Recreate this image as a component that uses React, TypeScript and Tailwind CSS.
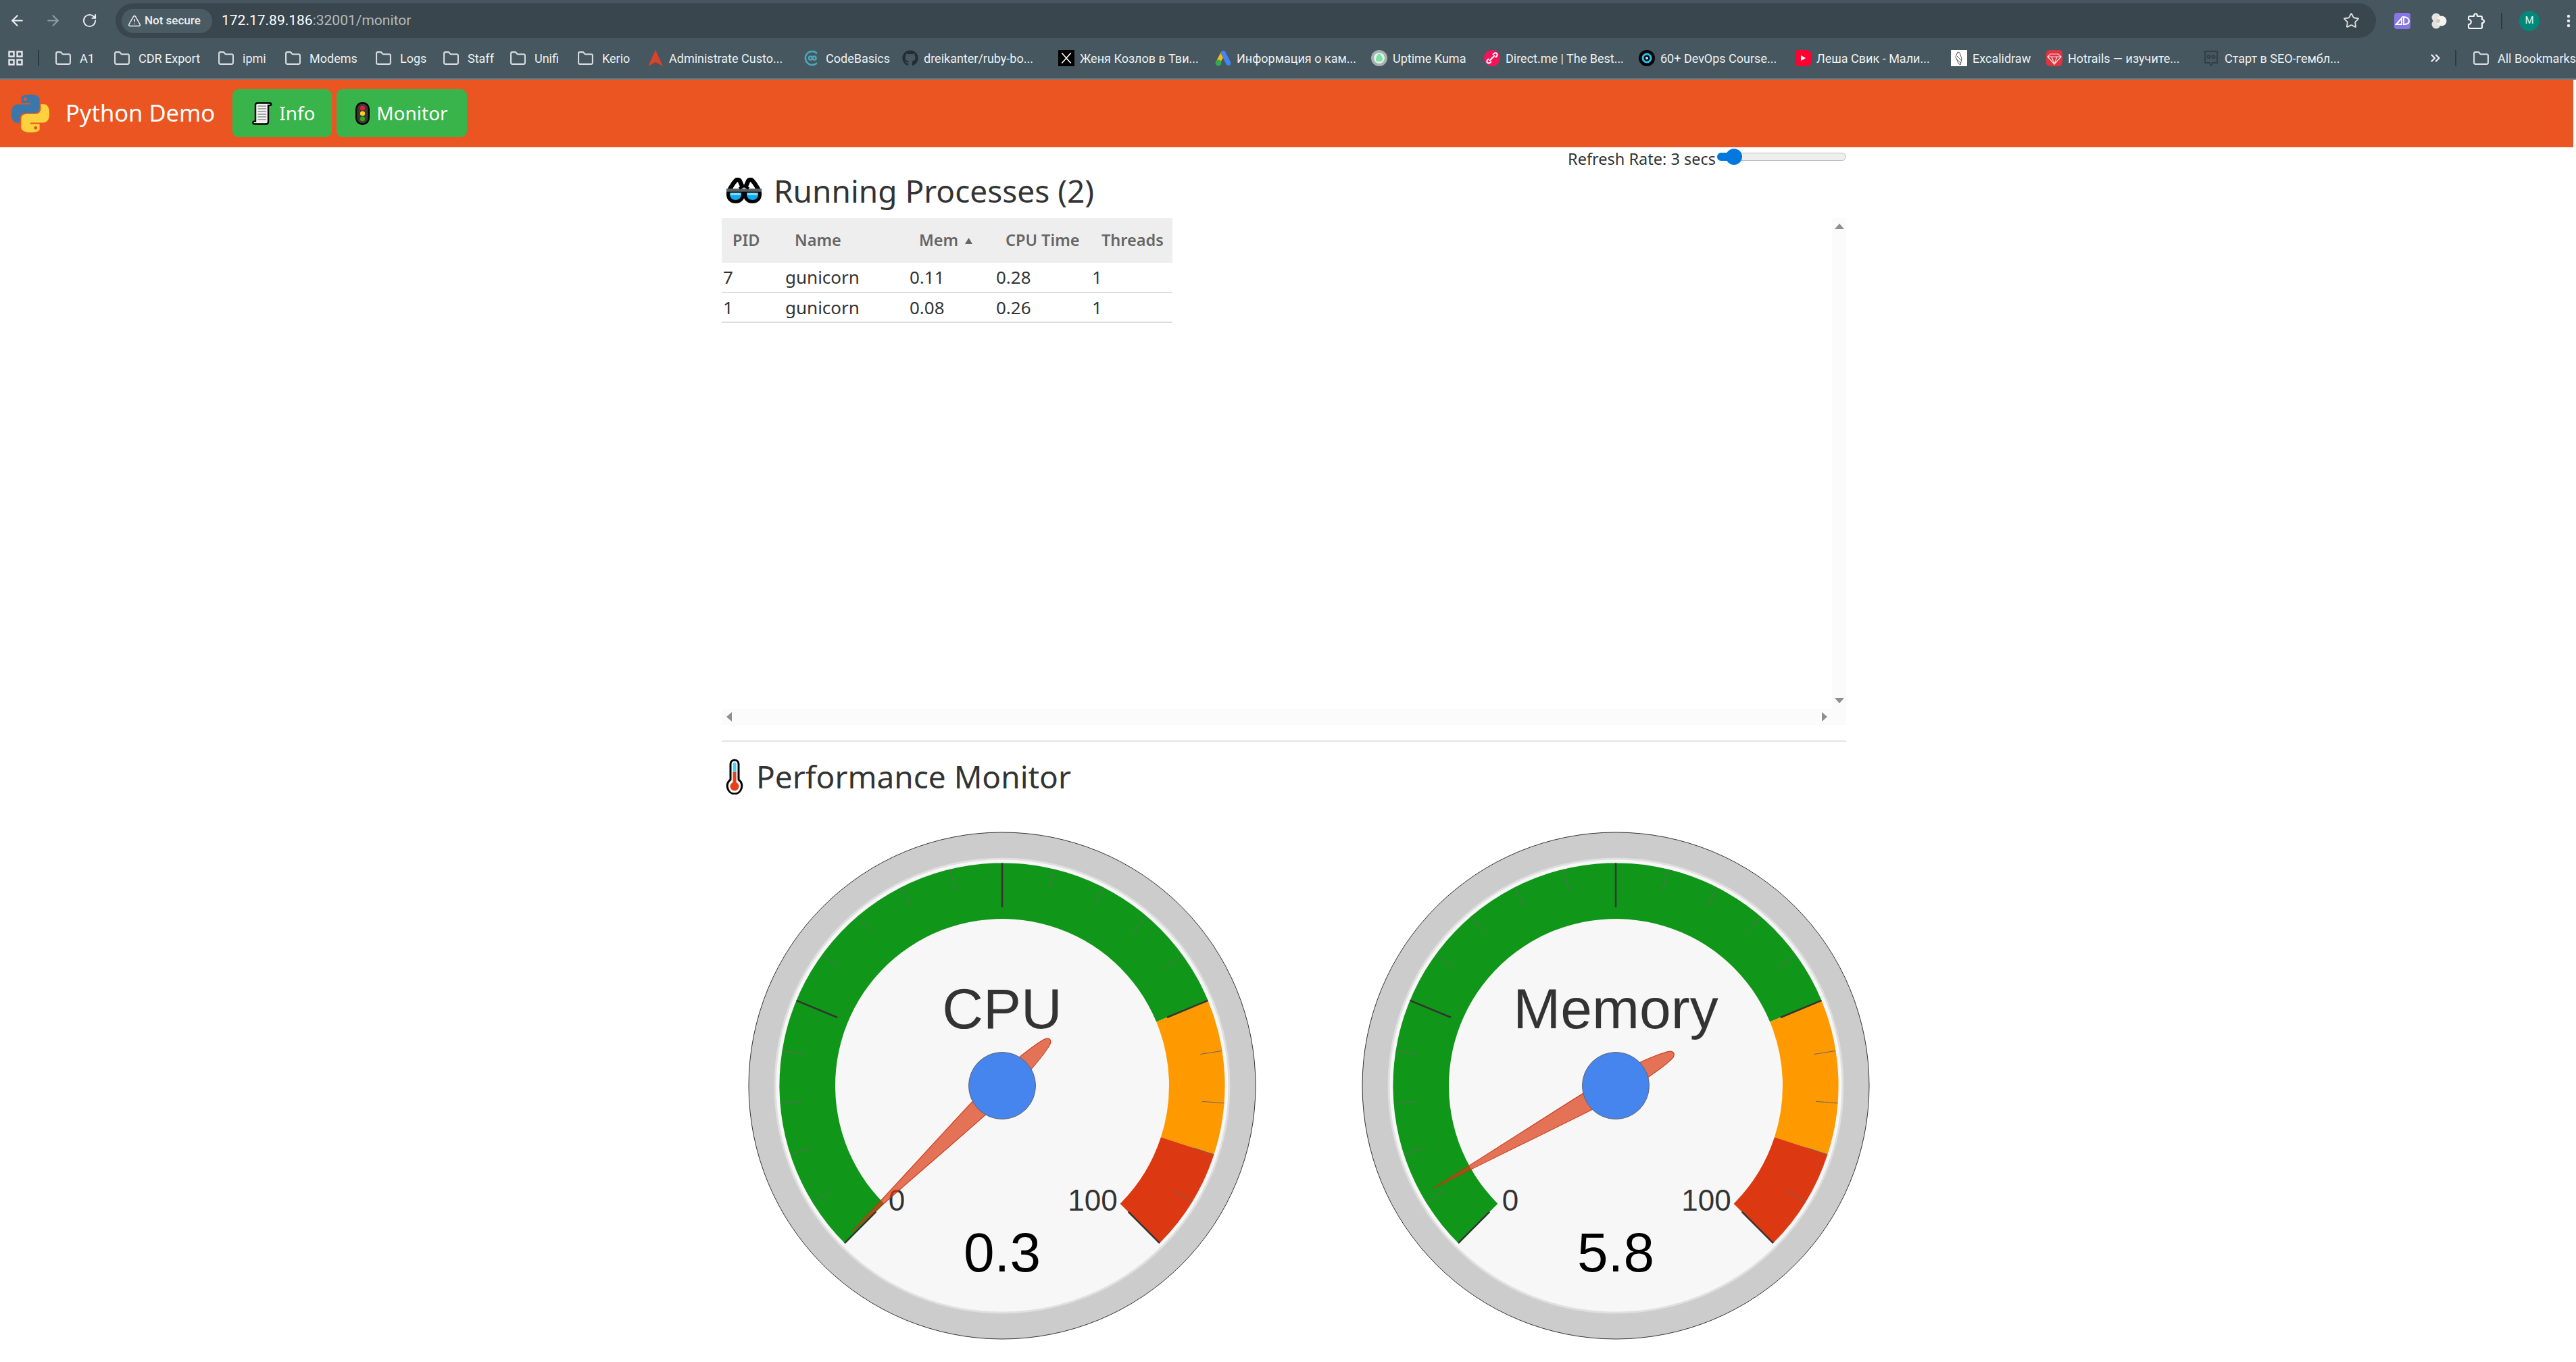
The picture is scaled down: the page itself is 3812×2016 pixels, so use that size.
import React from 'react'
import { ArrowLeft, ArrowRight, RotateCw, TriangleAlert, Star, EllipsisVertical, ChevronsRight, Folder } from 'lucide-react'
import { FaGithub } from 'react-icons/fa'

const polar = (r: number, deg: number) => {
    const a = (deg * Math.PI) / 180
    return [r * Math.sin(a), -r * Math.cos(a)]
}

const angleOf = (v: number) => -135 + (v / 100) * 270

function arc(from: number, to: number) {
    const R = 329.6
    const r = 247
    const a0 = angleOf(from)
    const a1 = angleOf(to)
    const large = a1 - a0 > 180 ? 1 : 0
    const [x0, y0] = polar(R, a0)
    const [x1, y1] = polar(R, a1)
    const [x2, y2] = polar(r, a1)
    const [x3, y3] = polar(r, a0)
    return `M${x0} ${y0}A${R} ${R} 0 ${large} 1 ${x1} ${y1}L${x2} ${y2}A${r} ${r} 0 ${large} 0 ${x3} ${y3}Z`
}

function Gauge({ title, value }: { title: string; value: number }) {
    const ticks = []
    for (let i = 0; i <= 20; i++) {
        const deg = angleOf(i * 5)
        const major = i % 5 === 0
        const [x0, y0] = polar(329.6, deg)
        const [x1, y1] = polar(major ? 264 : 297, deg)
        ticks.push(
            <line key={i} x1={x0} y1={y0} x2={x1} y2={y1} stroke={major ? '#333333' : '#666666'} strokeWidth={major ? 2.5 : 1} />
        )
    }
    return (
        <svg viewBox="-400 -400 800 800" className="w-[800px] h-[800px] shrink-0 font-['Liberation_Sans',sans-serif]">
            <circle r="375" fill="#cccccc" stroke="#333333" strokeWidth="1" />
            <circle r="336" fill="#f7f7f7" stroke="#e0e0e0" strokeWidth="3" />
            <path d={arc(0, 75)} fill="#109618" />
            <path d={arc(75, 90)} fill="#ff9900" />
            <path d={arc(90, 100)} fill="#dc3912" />
            {ticks}
            <text x="0" y="-85" textAnchor="middle" fontSize="84" fill="#333333">{title}</text>
            <text x="-156" y="185" textAnchor="middle" fontSize="44" fill="#333333">0</text>
            <text x="134" y="185" textAnchor="middle" fontSize="44" fill="#333333">100</text>
            <text x="0" y="275" textAnchor="middle" fontSize="82" fill="#000000">{value}</text>
            <g transform={`rotate(${angleOf(value)})`}>
                <path
                    d="M0 -311C4 -220 13 -80 15 -20C16 30 10 82 5 95Q0 102 -5 95C-10 82 -16 30 -15 -20C-13 -80 -4 -220 0 -311Z"
                    fill="#dc3912"
                    fillOpacity="0.7"
                    stroke="#c63310"
                    strokeWidth="1"
                />
            </g>
            <circle r="49.5" fill="#4684ee" stroke="#666666" strokeWidth="1" />
        </svg>
    )
}

function PythonLogo() {
    return (
        <svg viewBox="0 0 24 24" className="w-[56px] h-[56px]">
            <path
                fill="#3b77a8"
                fillRule="evenodd"
                d="M14.25.18l.9.2.73.26.59.3.45.32.34.34.25.34.16.33.1.3.04.26.02.2-.01.13V8.5l-.05.63-.13.55-.21.46-.26.38-.3.31-.33.25-.35.19-.35.14-.33.1-.3.07-.26.04-.21.02H8.77l-.69.05-.59.14-.5.22-.41.27-.33.32-.27.35-.2.36-.15.37-.1.35-.07.32-.04.27-.02.21v3.06H3.17l-.21-.03-.28-.07-.32-.12-.35-.18-.36-.26-.36-.36-.35-.46-.32-.59-.28-.73-.21-.88-.14-1.05-.05-1.23.06-1.22.16-1.04.24-.87.32-.71.36-.57.4-.44.42-.33.42-.24.4-.16.36-.1.32-.05.24-.01h.16l.06.01h8.16v-.83H6.18l-.01-2.75-.02-.37.05-.34.11-.31.17-.28.25-.26.31-.23.38-.2.44-.18.51-.15.58-.12.64-.1.71-.06.77-.04.84-.02 1.27.05zm-6.3 1.98l-.23.33-.08.41.08.41.23.34.33.22.41.09.41-.09.33-.22.23-.34.08-.41-.08-.41-.23-.33-.33-.22-.41-.09-.41.09z"
            />
            <path
                fill="#fdd23e"
                fillRule="evenodd"
                d="M21.04 6.11l.28.06.32.12.35.18.36.27.36.35.35.47.32.59.28.73.21.88.14 1.04.05 1.23-.06 1.23-.16 1.04-.24.86-.32.71-.36.57-.4.45-.42.33-.42.24-.4.16-.36.09-.32.05-.24.02-.16-.01h-8.22v.82h5.84l.01 2.76.02.36-.05.34-.11.31-.17.29-.25.25-.31.24-.38.2-.44.17-.51.15-.58.13-.64.09-.71.07-.77.04-.84.01-1.27-.04-1.07-.14-.9-.2-.73-.25-.59-.3-.45-.33-.34-.34-.25-.34-.16-.33-.1-.3-.04-.25-.02-.2.01-.13v-5.34l.05-.64.13-.54.21-.46.26-.38.3-.32.33-.24.35-.2.35-.14.33-.1.3-.06.26-.04.21-.02.13-.01h5.84l.69-.05.59-.14.5-.21.41-.28.33-.32.27-.35.2-.36.15-.36.1-.35.07-.32.04-.28.02-.21V6.07h2.09l.14.01zm-6.47 14.25l-.23.33-.08.41.08.41.23.33.33.23.41.08.41-.08.33-.23.23-.33.08-.41-.08-.41-.23-.33-.33-.23-.41-.08-.41.08z"
            />
        </svg>
    )
}

function ScrollIcon() {
    return (
        <svg viewBox="0 0 30 34" className="w-[30px] h-[34px] shrink-0">
            <path d="M8 1.5H26C29 1.5 29 5 26 5H24V29C24 31 23 32.5 21 32.5H4C0.5 32.5 0.5 28.5 4 28.5H5V4C5 2.5 6.5 1.5 8 1.5Z" fill="#f2f2f2" stroke="#000" strokeWidth="2.4" />
            <path d="M8.5 6H21M8.5 10H21M8.5 14H21M8.5 18H21M8.5 22H21M8.5 26H21" stroke="#a8a8a8" strokeWidth="2" />
        </svg>
    )
}

function TrafficIcon() {
    return (
        <svg viewBox="0 0 21 34" className="w-[21px] h-[34px] shrink-0">
            <rect x="1.2" y="1.2" width="18.6" height="31.6" rx="9" fill="#3a3a3a" stroke="#000" strokeWidth="2.4" />
            <circle cx="10.5" cy="9" r="3.6" fill="#e2202a" />
            <circle cx="10.5" cy="17" r="3.6" fill="#f8d61c" />
            <circle cx="10.5" cy="25" r="3.6" fill="#35a818" />
        </svg>
    )
}

function GlassesIcon() {
    return (
        <svg viewBox="0 0 54 38" className="w-[54px] h-[38px] shrink-0">
            <path d="M5 19C8 13 11 8 15 4C17 2 20 3 21 5L23 10" fill="none" stroke="#000" strokeWidth="6.5" strokeLinecap="round" />
            <path d="M49 19C46 13 43 8 39 4C37 2 34 3 33 5L31 10" fill="none" stroke="#000" strokeWidth="6.5" strokeLinecap="round" />
            <path d="M3.5 20H25.5V25C25.5 32 20 35.5 14.5 35.5C9 35.5 3.5 32 3.5 25Z" fill="#0fa9f5" stroke="#000" strokeWidth="5" />
            <path d="M28.5 20H50.5V25C50.5 32 45 35.5 39.5 35.5C34 35.5 28.5 32 28.5 25Z" fill="#0fa9f5" stroke="#000" strokeWidth="5" />
            <path d="M7 22.5H22V26H7ZM32 22.5H47V26H32Z" fill="#86dcfb" />
            <path d="M1 18.5H53" stroke="#5b5f63" strokeWidth="4.5" />
            <path d="M20 16L27 12L34 16" fill="none" stroke="#000" strokeWidth="4" />
        </svg>
    )
}

function ThermometerIcon() {
    return (
        <svg viewBox="0 0 28 53" className="w-[28px] h-[53px] shrink-0">
            <path d="M8 8C8 0 20 0 20 8V31C29 38 24 52 14 52C4 52 -1 38 8 31Z" fill="#fff" stroke="#000" strokeWidth="3" />
            <path d="M14 8V20" stroke="#4fd0ee" strokeWidth="5" strokeLinecap="round" />
            <path d="M14 20V38" stroke="#e8401c" strokeWidth="5" />
            <circle cx="14" cy="41" r="6.5" fill="#e8401c" />
        </svg>
    )
}

const bookmarkText = "text-[18px] text-[#eef1f2] whitespace-nowrap"

function FolderMark({ label, className }: { label: string; className: string }) {
    return (
        <div className={`flex items-center gap-[12px] shrink-0 ${className}`}>
            <Folder size={25} strokeWidth={2} className="text-[#d8dcde] shrink-0" />
            <span className={bookmarkText}>{label}</span>
        </div>
    )
}

function Mark({ label, className, children }: { label: string; className: string; children: React.ReactNode }) {
    return (
        <div className={`flex items-center gap-[8px] shrink-0 ${className}`}>
            <span className="w-[24px] h-[24px] shrink-0 flex items-center justify-center">{children}</span>
            <span className={bookmarkText}>{label}</span>
        </div>
    )
}

function Bookmarks() {
    return (
        <div className="h-[62px] border-b-[2px] border-[#6f7c84] bg-[#465760] flex items-center pl-[12px] font-['Roboto',sans-serif]">
            <svg viewBox="0 0 22 22" className="w-[22px] h-[22px] shrink-0 mr-[22px]" fill="none" stroke="#e8eaed" strokeWidth="2.4">
                <rect x="1.5" y="1.5" width="7" height="7" />
                <rect x="13.5" y="1.5" width="7" height="7" />
                <rect x="1.5" y="13.5" width="7" height="7" />
                <rect x="13.5" y="13.5" width="7" height="7" />
            </svg>
            <div className="w-[2px] h-[24px] bg-[#2f3a40] mr-[23px] shrink-0" />
            <FolderMark label="A1" className="w-[87px]" />
            <FolderMark label="CDR Export" className="w-[154px]" />
            <FolderMark label="ipmi" className="w-[99px]" />
            <FolderMark label="Modems" className="w-[134px]" />
            <FolderMark label="Logs" className="w-[100px]" />
            <FolderMark label="Staff" className="w-[99px]" />
            <FolderMark label="Unifi" className="w-[100px]" />
            <FolderMark label="Kerio" className="w-[104px]" />
            <Mark label="Administrate Custo..." className="w-[232px]">
                <svg viewBox="0 0 24 24" className="w-[24px] h-[24px]"><path d="M12 0L23 24L12 18L1 24Z" fill="#d8432c" /></svg>
            </Mark>
            <Mark label="CodeBasics" className="w-[145px]">
                <svg viewBox="0 0 24 24" className="w-[24px] h-[24px]" fill="none" stroke="#4aa8bd" strokeWidth="2.5">
                    <path d="M19 5A10 10 0 1 0 19 19" />
                    <circle cx="9.5" cy="12" r="2.5" />
                    <circle cx="15" cy="12" r="2.5" />
                </svg>
            </Mark>
            <Mark label="dreikanter/ruby-bo..." className="w-[231px]">
                <FaGithub size={24} className="text-[#252c33]" />
            </Mark>
            <Mark label="Женя Козлов в Тви..." className="w-[232px]">
                <span className="w-[24px] h-[24px] bg-black flex items-center justify-center">
                    <svg viewBox="0 0 24 24" className="w-[20px] h-[20px]" fill="none" stroke="#fff" strokeWidth="2">
                        <path d="M4 3L20 21M20 3L4 21" />
                    </svg>
                </span>
            </Mark>
            <Mark label="Информация о кам..." className="w-[231px]">
                <svg viewBox="0 0 24 24" className="w-[24px] h-[24px]">
                    <path d="M9 3L1 18L6 22L15 6Z" fill="#fbbc04" />
                    <path d="M12 1C14 1 15 2 16 4L23 18C24 21 22 23 20 23C18 23 17 22 16 20L9 6C8 3 10 1 12 1Z" fill="#4285f4" />
                    <circle cx="5" cy="19" r="4.5" fill="#34a853" />
                </svg>
            </Mark>
            <Mark label="Uptime Kuma" className="w-[167px]">
                <svg viewBox="0 0 24 24" className="w-[24px] h-[24px]">
                    <circle cx="12" cy="12" r="12" fill="#a9b0b2" />
                    <circle cx="12" cy="12" r="8" fill="#e2f3e8" />
                    <path d="M12 5C16 8 17 12 17 15C17 18 7 18 7 15C7 12 8 8 12 5Z" fill="#7fe3a4" />
                </svg>
            </Mark>
            <Mark label="Direct.me | The Best..." className="w-[229px]">
                <svg viewBox="0 0 24 24" className="w-[24px] h-[24px]">
                    <circle cx="12" cy="12" r="12" fill="#f2145b" />
                    <path d="M8 16L16 8M7 13L5 15C3 19 7 21 10 18L11 17M13 7L15 5C18 3 21 6 19 9L17 11" fill="none" stroke="#fff" strokeWidth="2" />
                </svg>
            </Mark>
            <Mark label="60+ DevOps Course..." className="w-[231px]">
                <svg viewBox="0 0 24 24" className="w-[24px] h-[24px]">
                    <circle cx="12" cy="12" r="12" fill="#050505" />
                    <circle cx="12" cy="12" r="6" fill="none" stroke="#27c1ee" strokeWidth="3" />
                    <circle cx="12" cy="12" r="2" fill="#bdeffc" />
                </svg>
            </Mark>
            <Mark label="Леша Свик - Мали..." className="w-[231px]">
                <svg viewBox="0 0 24 24" className="w-[24px] h-[24px]">
                    <rect width="24" height="24" rx="6" fill="#ff0033" />
                    <path d="M9 8L16 12L9 16Z" fill="#fff" />
                </svg>
            </Mark>
            <Mark label="Excalidraw" className="w-[141px]">
                <svg viewBox="0 0 24 24" className="w-[24px] h-[24px]">
                    <rect width="24" height="24" fill="#fff" />
                    <path d="M10 3L7 10L11 20L14 22L16 13L13 4ZM9 9L15 15M8 13L14 19" fill="none" stroke="#555" strokeWidth="1" />
                </svg>
            </Mark>
            <Mark label="Hotrails — изучите..." className="w-[232px]">
                <svg viewBox="0 0 24 24" className="w-[24px] h-[24px]">
                    <rect width="24" height="24" rx="5" fill="#db3540" />
                    <path d="M6 6H18L22 10L12 21L2 10ZM2 10H22M8 10L12 21L16 10" fill="none" stroke="#ffd9dc" strokeWidth="1.2" />
                </svg>
            </Mark>
            <Mark label="Старт в SEO-гембл..." className="w-[333px]">
                <svg viewBox="0 0 24 24" className="w-[24px] h-[24px]" fill="none" stroke="#333e44" strokeWidth="2">
                    <path d="M3 2H21V19H14L12 23L10 19H3Z" />
                    <circle cx="8.5" cy="10" r="2" />
                    <circle cx="15.5" cy="10" r="2" />
                </svg>
            </Mark>
            <ChevronsRight size={22} strokeWidth={2.4} className="text-[#eef1f2] shrink-0 mr-[18px]" />
            <div className="w-[2px] h-[24px] bg-[#2f3a40] mr-[24px] shrink-0" />
            <FolderMark label="All Bookmarks" className="" />
        </div>
    )
}

function Toolbar() {
    return (
        <div className="h-[56px] bg-[#465760] flex items-start font-['Roboto',sans-serif]">
            <div className="h-[51px] mt-[5px] flex items-center shrink-0 pl-[13px]">
                <ArrowLeft size={25} strokeWidth={2} className="text-[#eef1f2] mr-[28px]" />
                <ArrowRight size={25} strokeWidth={2} className="text-[#8f9ca3] mr-[30px]" />
                <RotateCw size={23} strokeWidth={2} className="text-[#eef1f2] mr-[27px]" />
            </div>
            <div className="w-[3345px] h-[51px] mt-[5px] rounded-full bg-[#3a464d] flex items-center pl-[9px] pr-[24px] shrink-0">
                <div className="w-[134px] h-[36px] rounded-full bg-[#4b5b63] flex items-center pl-[9px] gap-[5px] shrink-0">
                    <TriangleAlert size={20} strokeWidth={1.8} className="text-[#eef1f2] shrink-0" />
                    <span className="text-[17px] font-medium text-[#eef1f2] whitespace-nowrap">Not secure</span>
                </div>
                <span className="ml-[14px] text-[21px] text-white whitespace-nowrap">
                    172.17.89.186<span className="text-[#b3babe]">:32001/monitor</span>
                </span>
                <Star size={25} strokeWidth={1.8} className="text-[#d8dcde] ml-auto" />
            </div>
            <div className="h-[51px] mt-[5px] flex items-center shrink-0 pl-[27px]">
                <svg viewBox="0 0 24 24" className="w-[24px] h-[24px] mr-[30px]">
                    <rect width="24" height="24" rx="4" fill="#8777e4" />
                    <path d="M3 17H11V8ZM12 6C19 6 22 9 22 12C22 15 19 17 14 17V6" fill="none" stroke="#fff" strokeWidth="2" />
                </svg>
                <svg viewBox="0 0 24 24" className="w-[24px] h-[24px] mr-[30px]">
                    <circle cx="8" cy="7" r="6.5" fill="#e6e3df" />
                    <circle cx="8" cy="17" r="6.5" fill="#e6e3df" />
                    <circle cx="16" cy="12" r="7.5" fill="#f5f3f0" />
                    <circle cx="11" cy="12" r="3" fill="#cfccc8" />
                </svg>
                <svg viewBox="0 0 26 26" className="w-[26px] h-[26px] mr-[24px]" fill="none" stroke="#f4f4f4" strokeWidth="2.2" strokeLinejoin="round">
                    <path d="M4 6H10C10 1 15 1 15 6H20C21 6 22 7 22 8V11C26 11 26 16 22 16V22C22 23 21 24 20 24H4C3 24 2 23 2 22V18C7 18 7 11 2 11V8C2 7 3 6 4 6Z" />
                </svg>
                <div className="w-[2px] h-[24px] bg-[#2f3a40] mr-[25px]" />
                <span className="w-[30px] h-[30px] rounded-full bg-[#00897b] text-[#e8f5f3] text-[15px] flex items-center justify-center mr-[31px]">M</span>
                <EllipsisVertical size={24} strokeWidth={2.4} className="text-[#eef1f2]" />
            </div>
        </div>
    )
}

function Navbar() {
    return (
        <nav className="w-[3808px] h-[100px] bg-[#eb5521] flex items-center pl-[17px] font-['Noto_Sans',sans-serif]">
            <PythonLogo />
            <span className="ml-[24px] mt-[-3px] text-[34.5px] text-white whitespace-nowrap">Python Demo</span>
            <div className="ml-[26px] w-[147px] h-[71px] mt-[-1px] rounded-[9px] bg-[#38b44a] flex items-center pl-[29px] gap-[10px] text-[28px] text-white">
                <ScrollIcon />
                <span className="mt-[-2px]">Info</span>
            </div>
            <div className="ml-[7px] w-[193px] h-[71px] mt-[-1px] rounded-[9px] bg-[#38b44a] flex items-center pl-[28px] gap-[10px] text-[28px] text-white">
                <TrafficIcon />
                <span className="mt-[-2px]">Monitor</span>
            </div>
        </nav>
    )
}

function ProcessTable() {
    const th = "h-[66px] pl-[16px] text-left text-[23.5px] font-semibold text-[#666666] whitespace-nowrap"
    const td = "h-[44px] pl-[2px] text-[26px] text-[#333333] border-b-[2px] border-[#dddddd]"
    return (
        <table className="w-[667px] table-fixed border-collapse">
            <colgroup>
                <col className="w-[92px]" />
                <col className="w-[184px]" />
                <col className="w-[128px]" />
                <col className="w-[142px]" />
                <col className="w-[121px]" />
            </colgroup>
            <thead className="bg-[#eeeeee]">
                <tr>
                    <th className={th}>PID</th>
                    <th className={th}>Name</th>
                    <th className={th}>
                        <span className="flex items-center gap-[10px]">
                            Mem
                            <svg viewBox="0 0 12 10" className="w-[11px] h-[9px]"><path d="M6 0L12 10H0Z" fill="#666666" /></svg>
                        </span>
                    </th>
                    <th className={th}>CPU Time</th>
                    <th className={th}>Threads</th>
                </tr>
            </thead>
            <tbody>
                <tr>
                    <td className={td}>7</td>
                    <td className={td}>gunicorn</td>
                    <td className={td}>0.11</td>
                    <td className={td}>0.28</td>
                    <td className={td}>1</td>
                </tr>
                <tr>
                    <td className={td}>1</td>
                    <td className={td}>gunicorn</td>
                    <td className={td}>0.08</td>
                    <td className={td}>0.26</td>
                    <td className={td}>1</td>
                </tr>
            </tbody>
        </table>
    )
}

function Arrow({ points, className }: { points: string; className: string }) {
    return (
        <svg viewBox="0 0 16 16" className={className} preserveAspectRatio="none">
            <polygon points={points} fill="#8f8f8f" />
        </svg>
    )
}

export default function App() {
    return (
        <div className="w-[3812px] h-[2016px] overflow-hidden bg-white text-[#333333]">
            <Toolbar />
            <Bookmarks />
            <Navbar />
            <main className="w-[1664px] ml-[1068px] font-['Noto_Sans',sans-serif]">
                <div className="h-[30px] flex justify-end items-start">
                    <span className="text-[23.5px] leading-[30px] mt-[2px] whitespace-nowrap">Refresh Rate: 3 secs</span>
                    <div className="relative w-[191px] h-[12px] mt-[8px] ml-[2px] rounded-full bg-[#eeeeee] border border-[#bbbbbb]">
                        <div className="w-[30px] h-[12px] mt-[-1px] ml-[-1px] rounded-l-full bg-[#0278dc]" />
                        <div className="absolute left-[12px] top-[-7px] w-[24px] h-[24px] rounded-full bg-[#0278dc]" />
                    </div>
                </div>
                <div className="h-[75px] flex items-center pb-[7px] pl-[6px] gap-[17px]">
                    <GlassesIcon />
                    <h2 className="text-[46px] leading-none whitespace-nowrap">Running Processes (2)</h2>
                </div>
                <div className="h-[726px] flex">
                    <div className="flex-1"><ProcessTable /></div>
                    <div className="w-[21px] bg-[#fbfbfb] flex flex-col items-center justify-between py-[8px]">
                        <Arrow points="8,0 16,16 0,16" className="w-[14px] h-[8px]" />
                        <Arrow points="0,0 16,0 8,16" className="w-[14px] h-[8px]" />
                    </div>
                </div>
                <div className="h-[24px] bg-[#fbfbfb] flex items-center justify-between pl-[7px] pr-[28px]">
                    <Arrow points="16,0 16,16 0,8" className="w-[8px] h-[14px]" />
                    <Arrow points="0,0 16,8 0,16" className="w-[8px] h-[14px]" />
                </div>
                <hr className="mt-[23px] border-t-[2px] border-[#e5e5e5]" />
                <div className="h-[109px] flex items-start pt-[25px] pl-[5px] gap-[18px]">
                    <ThermometerIcon />
                    <h2 className="text-[46px] leading-[53px] whitespace-nowrap">Performance Monitor</h2>
                </div>
                <div className="flex gap-[108px] pl-[15px]">
                    <Gauge title="CPU" value={0.3} />
                    <Gauge title="Memory" value={5.8} />
                </div>
            </main>
        </div>
    )
}
